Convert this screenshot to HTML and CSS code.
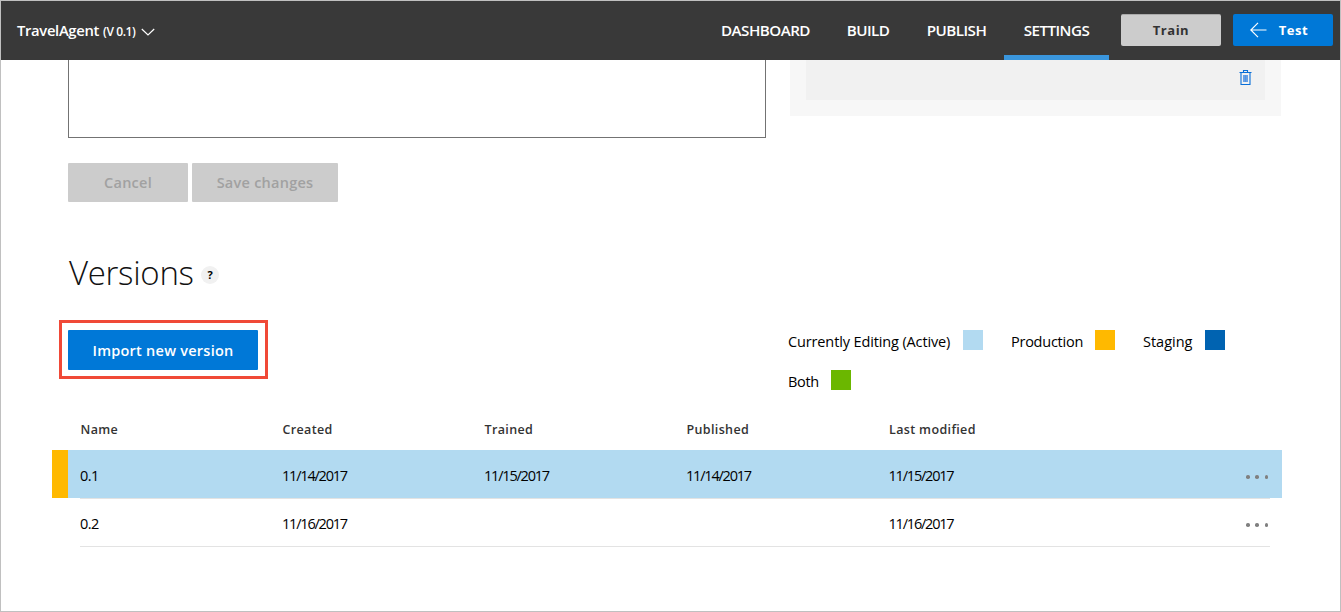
FILE: index.html
```html
<!DOCTYPE html>
<html lang="en">
<head>
<meta charset="utf-8">
<title>TravelAgent - Settings</title>
<link rel="stylesheet" href="styles.css">
</head>
<body>
<div class="page">
  <header class="topbar">
    <div class="app-name"><span class="app-title">TravelAgent</span><span class="app-version">(V 0.1)</span>
      <svg class="chevron" width="14" height="8" viewBox="0 0 14 8"><path d="M.8 1 7 7 13.200 1" fill="none" stroke="#fff" stroke-width="1.2"/></svg>
    </div>
    <nav class="nav">
      <a class="nav-item nav-dashboard"><span>DASHBOARD</span></a>
      <a class="nav-item nav-build"><span>BUILD</span></a>
      <a class="nav-item nav-publish"><span>PUBLISH</span></a>
      <a class="nav-item nav-settings active"><span>SETTINGS</span></a>
    </nav>
    <button class="top-btn train"><span>Train</span></button>
    <button class="top-btn test"><svg width="17" height="16" viewBox="0 0 17 16"><path d="M16.500 8H1M8 .8.8 8 8 15.200" fill="none" stroke="#fff" stroke-width="1.2"/></svg><span>Test</span></button>
  </header>
  <main class="content">
    <div class="form-row">
      <div class="textarea"></div>
      <div class="keys-panel">
        <div class="keys-row">
          <svg width="13" height="16" viewBox="0 0 13 16"><path d="M.5 2.500h12M4.500 2V.5h4V2M2 2.500v12h9v-12" fill="none" stroke="#0a6fd8" stroke-width="1.1"/><path d="M4 5h5v7H4z" fill="#7faee8"/><path d="M5 5v7M6.500 5v7M8 5v7" stroke="#3f88de" stroke-width=".7"/></svg>
        </div>
      </div>
    </div>
    <div class="form-actions">
      <button class="btn disabled cancel"><span>Cancel</span></button>
      <button class="btn disabled save"><span>Save changes</span></button>
    </div>
    <div class="heading">
      <h1><span>Versions</span></h1>
      <span class="help">?</span>
    </div>
    <div class="toolbar">
      <div class="highlight"><button class="btn import"><span>Import new version</span></button></div>
      <div class="legend">
        <div class="legend-item l-active"><span>Currently Editing (Active)</span><i class="swatch active-color"></i></div>
        <div class="legend-item l-production"><span>Production</span><i class="swatch production-color"></i></div>
        <div class="legend-item l-staging"><span>Staging</span><i class="swatch staging-color"></i></div>
        <div class="legend-item l-both"><span>Both</span><i class="swatch both-color"></i></div>
      </div>
    </div>
    <div class="versions">
      <div class="row head"><span>Name</span><span>Created</span><span>Trained</span><span>Published</span><span class="last">Last modified</span></div>
      <div class="row current"><span class="version">0.1</span><span>11/14/2017</span><span>11/15/2017</span><span>11/14/2017</span><span>11/15/2017</span><span class="more"><i></i><i></i><i></i></span></div>
      <div class="rule"></div>
      <div class="row second"><span class="version">0.2</span><span>11/16/2017</span><span></span><span></span><span>11/16/2017</span><span class="more"><i></i><i></i><i></i></span></div>
      <div class="rule"></div>
    </div>
  </main>
</div>
</body>
</html>
```
FILE: styles.css
```css
* { box-sizing: border-box; }
body { margin: 0; font-family: "Open Sans", "Noto Sans", sans-serif; color: #000; font-size: 14px; background: #fff; }
button { font-family: inherit; border: 0; padding: 0; margin: 0; }
span { white-space: nowrap; }
.page { width: 1341px; height: 612px; border: 1px solid #c0c0c0; overflow: hidden; }

.topbar { height: 59px; background: #393939; color: #fff; display: flex; align-items: center; padding: 0 7px 0 16px; font-weight: 600; }
.app-name { display: flex; align-items: center; width: 687px; }
.app-title { width: 86px; font-size: 14.8px; letter-spacing: -.33px; padding-bottom: 2px; }
.app-version { width: 38px; font-size: 12px; letter-spacing: -.4px; padding-top: 2px; }
.chevron { margin-top: 3px; }
.nav { display: flex; height: 59px; width: 405px; }
.nav-item { display: flex; align-items: center; justify-content: center; font-size: 15.2px; letter-spacing: -.54px; border-bottom: 5px solid transparent; padding-top: 3px; }
.nav-dashboard { width: 123px; }
.nav-build { width: 82px; }
.nav-publish { width: 95px; }
.nav-settings { width: 105px; }
.nav-item.active { border-bottom-color: #3a96dd; }
.top-btn { height: 32px; width: 100px; border-radius: 2px; font-size: 13px; font-weight: 700; letter-spacing: .5px; display: flex; align-items: center; justify-content: center; margin: 0 0 1px 12px; }
.train { background: #ccc; color: #333; border-top: 1px solid #aaa; padding-bottom: 1px; }
.test { background: #0078d7; color: #fff; gap: 12px; padding-right: 8px; }

.content { padding-left: 51px; }
.form-row { display: flex; gap: 24px; padding-left: 16px; align-items: flex-start; }
.textarea { width: 698px; height: 78px; border: 1px solid #737373; border-top: 0; }
.keys-panel { width: 491px; height: 56px; background: #f7f7f7; padding: 0 16px; }
.keys-row { height: 40px; background: #f1f1f1; display: flex; justify-content: flex-end; padding: 10px 13px 0 0; }
.form-actions { display: flex; gap: 4px; padding: 25px 0 0 16px; }
.btn { height: 39px; border-radius: 1px; font-size: 14.5px; font-weight: 600; letter-spacing: .25px; }
.disabled { background: #ccc; color: #a1a1a1; }
.cancel { width: 120px; }
.save { width: 146px; }
.heading { display: flex; align-items: center; height: 50px; margin: 46px 0 0 16px; }
h1 { margin: 0; width: 133px; padding-left: 1px; font-size: 33px; font-weight: 300; line-height: 50px; letter-spacing: -.3px; color: #111; }
.help { width: 18px; height: 18px; margin-top: 4px; border-radius: 50%; background: #f1f1f1; font-size: 11px; line-height: 18px; font-weight: 700; text-align: center; }
.toolbar { display: flex; margin: 22px 0 0 7px; height: 90px; align-items: flex-start; }
.highlight { width: 209px; height: 59px; border: 3px solid #f04937; padding: 7px 6px 6px; }
.import { display: block; width: 190px; height: 40px; background: #0078d7; color: #fff; }
.legend { display: flex; flex-wrap: wrap; width: 470px; margin-left: 520px; padding-top: 10px; row-gap: 20px; }
.legend-item { display: flex; height: 20px; justify-content: space-between; margin-right: 28px; line-height: 23px; font-size: 14.5px; letter-spacing: -.13px; }
.l-active { width: 195px; }
.l-production { width: 104px; letter-spacing: -.25px; }
.l-staging { width: 82px; letter-spacing: 0; }
.l-both { width: 63px; letter-spacing: -.3px; }
.swatch { width: 20px; height: 20px; }
.active-color { background: #b2daf1; }
.production-color { background: #ffb900; }
.staging-color { background: #0063b1; }
.both-color { background: #6bb700; }

.row { display: grid; grid-template-columns: 202px 202px 202px 202.500px 1fr 22px; height: 48px; width: 1230px; padding: 0 14px 0 28px; line-height: 51px; font-size: 14.5px; letter-spacing: -1.2px; }
.version { letter-spacing: -.5px; }
.current { background: #b2daf1; box-shadow: inset 16px 0 #ffb900; }
.second { height: 47px; line-height: 49px; }
.head { height: 40px; line-height: 39px; font-size: 12.500px; font-weight: 600; color: #333; letter-spacing: .36px; padding-left: 28.500px; }
.rule { width: 1190px; height: 1px; margin-left: 28px; background: #e3e3e3; }
.more { display: flex; justify-content: space-between; align-items: center; padding-top: 4px; }
.more i { width: 3.500px; height: 3.500px; border-radius: 50%; background: #808080; }
.current .more { padding-top: 3px; }
.second .more { padding-top: 3px; }
```
